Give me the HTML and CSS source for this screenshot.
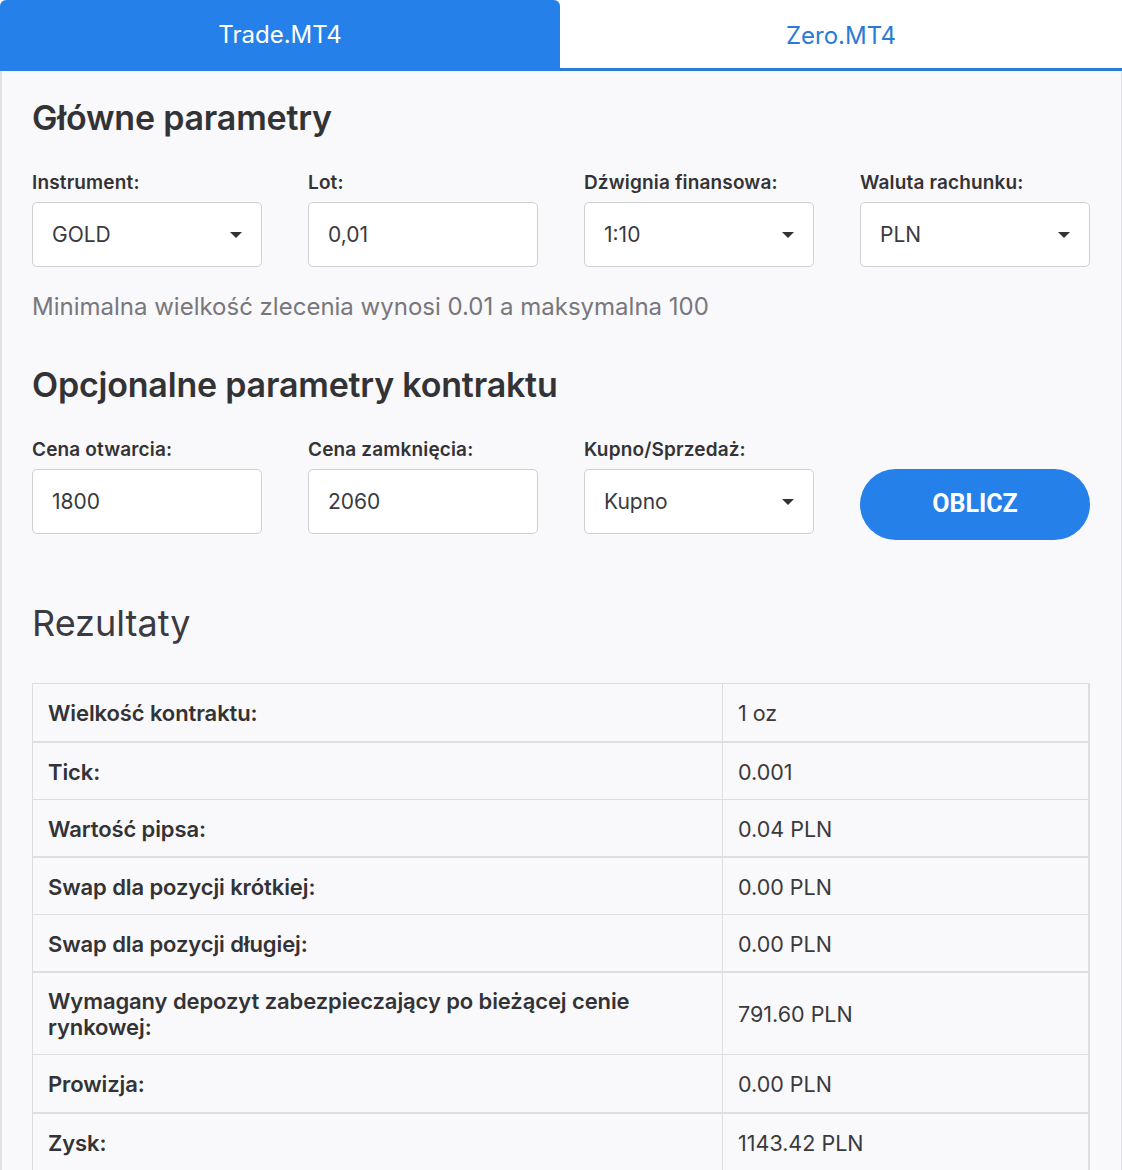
FILE: index.html
```html
<!DOCTYPE html>
<html lang="pl">
<head>
<meta charset="utf-8">
<title>Kalkulator</title>
<link rel="stylesheet" href="styles.css">
</head>
<body>
<div class="tabs">
  <div class="tab tab-active">Trade.MT4</div>
  <div class="tab">Zero.MT4</div>
</div>
<div class="panel">
  <h1 class="title">Główne parametry</h1>
  <div class="grid">
    <div class="group">
      <div class="label">Instrument:</div>
      <div class="field select"><span>GOLD</span><svg class="caret" width="12" height="6" viewBox="0 0 12 6"><path d="M0 0H12L6 6Z" fill="#333"/></svg></div>
    </div>
    <div class="group">
      <div class="label">Lot:</div>
      <div class="field"><span>0,01</span></div>
    </div>
    <div class="group">
      <div class="label">Dźwignia finansowa:</div>
      <div class="field select"><span>1:10</span><svg class="caret" width="12" height="6" viewBox="0 0 12 6"><path d="M0 0H12L6 6Z" fill="#333"/></svg></div>
    </div>
    <div class="group">
      <div class="label">Waluta rachunku:</div>
      <div class="field select"><span>PLN</span><svg class="caret" width="12" height="6" viewBox="0 0 12 6"><path d="M0 0H12L6 6Z" fill="#333"/></svg></div>
    </div>
  </div>
  <p class="help">Minimalna wielkość zlecenia wynosi 0.01 a maksymalna 100</p>

  <h2 class="title title-2">Opcjonalne parametry kontraktu</h2>
  <div class="grid">
    <div class="group">
      <div class="label">Cena otwarcia:</div>
      <div class="field"><span>1800</span></div>
    </div>
    <div class="group">
      <div class="label">Cena zamknięcia:</div>
      <div class="field"><span>2060</span></div>
    </div>
    <div class="group">
      <div class="label">Kupno/Sprzedaż:</div>
      <div class="field select"><span>Kupno</span><svg class="caret" width="12" height="6" viewBox="0 0 12 6"><path d="M0 0H12L6 6Z" fill="#333"/></svg></div>
    </div>
    <div class="group group-btn">
      <button class="btn">OBLICZ</button>
    </div>
  </div>

  <h2 class="results-title">Rezultaty</h2>
  <table class="results">
    <tr><th>Wielkość kontraktu:</th><td>1 oz</td></tr>
    <tr class="thick"><th>Tick:</th><td>0.001</td></tr>
    <tr class="short"><th>Wartość pipsa:</th><td>0.04 PLN</td></tr>
    <tr class="thick"><th>Swap dla pozycji krótkiej:</th><td>0.00 PLN</td></tr>
    <tr class="short"><th>Swap dla pozycji długiej:</th><td>0.00 PLN</td></tr>
    <tr class="thick tall"><th>Wymagany depozyt zabezpieczający po bieżącej cenie rynkowej:</th><td>791.60 PLN</td></tr>
    <tr><th>Prowizja:</th><td>0.00 PLN</td></tr>
    <tr class="thick"><th>Zysk:</th><td>1143.42 PLN</td></tr>
  </table>
</div>
</body>
</html>
```

FILE: styles.css
```css
* { box-sizing: border-box; }
html, body { margin: 0; padding: 0; background: #f9f8fb; }
body {
  font-family: Inter, "Noto Sans", sans-serif;
  color: #333336;
}
.tabs {
  display: flex;
  height: 71px;
  background: #fff;
  border-bottom: 3px solid #2a7ad8;
}
.tab {
  width: 562px;
  display: flex;
  align-items: center;
  justify-content: center;
  font-size: 24px;
  color: #2a7ad8;
  padding-top: 2px;
}
.tab-active {
  width: 560px;
  background: #2680e9;
  color: #fff;
  border-radius: 6px 6px 0 0;
  margin-bottom: -3px;
  padding-top: 0;
  padding-bottom: 2px;
}
.panel {
  border-left: 2px solid #e2e1e6;
  border-right: 1px solid #e2e1e6;
  padding: 26px 31px 40px 30px;
  min-height: 1099px;
}
.title {
  margin: 0;
  font-size: 34px;
  line-height: 41px;
  font-weight: 600;
  color: #333336;
  letter-spacing: -0.2px;
}
.title-2 { margin-top: 43px; }
.grid {
  display: grid;
  grid-template-columns: repeat(4, 230px);
  column-gap: 46px;
  margin-top: 34px;
}
.title-2 + .grid { margin-top: 34px; }
.label {
  font-size: 19px;
  line-height: 22px;
  font-weight: 600;
  color: #333336;
  letter-spacing: 0.15px;
  margin-bottom: 8px;
}
.field {
  height: 65px;
  background: #fff;
  border: 1px solid #d0cfd4;
  border-radius: 5px;
  padding: 0 19px 0 19px;
  display: flex;
  align-items: center;
  justify-content: space-between;
  font-size: 21px;
  color: #3a3a3e;
}
.caret { display: block; margin-top: 1px; }
.group-btn { display: flex; align-items: flex-end; }
.btn {
  width: 230px;
  height: 71px;
  border: none;
  border-radius: 36px;
  background: #2680e9;
  color: #fff;
  font-family: Roboto, Inter, sans-serif;
  font-weight: 700;
  font-size: 25px;
  margin-bottom: -6px;
  padding: 0 0 3px;
  cursor: pointer;
}
.help {
  margin: 26px 0 0;
  font-size: 24px;
  line-height: 28px;
  color: #77777d;
}
.results-title {
  margin: 68px 0 0;
  font-size: 36px;
  line-height: 43px;
  font-weight: 400;
  color: #3a3a40;
}
.results {
  margin-top: 38px;
  width: 1058px;
  border-collapse: collapse;
  border: 1px solid #dedde2;
  border-right: 2px solid #dedde2;
}
.results th, .results td {
  border: 1px solid #dedde2;
  height: 58px;
  padding: 2px 15px 0;
  text-align: left;
  vertical-align: middle;
  line-height: 26px;
}
.results th {
  width: 690px;
  font-size: 22px;
  font-weight: 600;
  color: #333336;
  letter-spacing: -0.1px;
}
.results td { font-size: 21.5px; font-weight: 400; color: #3a3a3e; }
.results tr.thick th, .results tr.thick td { border-top: 2px solid #dedde2; }
.results tr.short th, .results tr.short td { height: 57px; }
.results tr.tall th, .results tr.tall td { height: 83px; }
.results tr.tall th { padding-right: 40px; }
```
